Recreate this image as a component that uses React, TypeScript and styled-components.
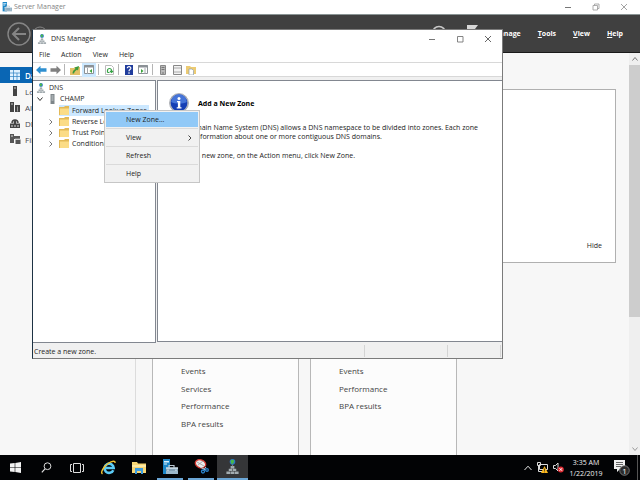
import React from "react";
import styled, { createGlobalStyle, css } from "styled-components";

const Global = createGlobalStyle`
  * { box-sizing: border-box; }
  body {
    margin: 0;
    font-family: "Open Sans", "Noto Sans", sans-serif;
    font-size: 7px;
    color: #1e1e1e;
    overflow: hidden;
  }
  button {
    font: inherit;
    color: inherit;
    background: none;
    border: 0;
    padding: 0;
    margin: 0;
    display: flex;
    align-items: center;
  }
  ul { list-style: none; margin: 0; padding: 0; }
  a { color: inherit; text-decoration: none; }
  p, h1, h2 { margin: 0; font-size: inherit; font-weight: inherit; }
  svg { display: block; flex: none; }
`;

/* ---------- Desktop ---------- */

const Desktop = styled.div`
  position: relative;
  display: flex;
  flex-direction: column;
  height: 100vh;
  overflow: hidden;
`;

/* ---------- Server Manager ---------- */

const ServerWindow = styled.section`
  flex: 1;
  min-height: 0;
  display: flex;
  flex-direction: column;
  background: #f7f7f7;
`;

const ServerTitle = styled.header`
  height: 14px;
  flex: none;
  display: flex;
  align-items: center;
  padding: 0 12px 0 2px;
  gap: 2px;
  background: #fff;
  color: #858585;
  font-size: 7px;
  line-height: 12px;
`;

const WindowButtons = styled.div`
  margin-left: auto;
  display: flex;
  align-items: center;
  gap: 20px;
`;

const Ribbon = styled.nav`
  height: 39px;
  flex: none;
  display: flex;
  align-items: center;
  padding: 0 17px 0 7px;
  background: #404040;
  border-top: 1px solid #8a9494;
  border-bottom: 1px solid #1a1a1a;
  color: #fff;
  font-size: 7px;
  font-weight: 700;
`;

const RibbonTools = styled.div`
  margin-left: auto;
  display: flex;
  align-items: center;
  gap: 8px;
`;

const RibbonMenu = styled.div`
  display: flex;
  margin-left: 14px;
  gap: 17px;
  u { text-underline-offset: 1px; }
`;

const ServerBody = styled.div`
  flex: 1;
  min-height: 0;
  display: flex;
`;

const Sidebar = styled.ul`
  width: 136px;
  flex: none;
  padding-top: 14px;
  border-right: 1px solid #dcdcdc;
`;

const SidebarItem = styled.li<{ $active?: boolean }>`
  height: 16px;
  a {
    display: flex;
    align-items: center;
    gap: 4px;
    height: 16px;
    padding-left: 9px;
    font-size: 8px;
    color: #4a4a55;
    white-space: nowrap;
  }
  ${(p) =>
    p.$active &&
    css`
      background: #0a66b4;
      a { color: #fff; font-weight: 600; }
    `}
`;

const Dashboard = styled.main`
  flex: 1;
  min-width: 0;
  padding: 36px 13px 0 16px;
  overflow: hidden;
`;

const Welcome = styled.section`
  height: 174px;
  display: flex;
  justify-content: flex-end;
  align-items: flex-end;
  padding: 0 13px 12px;
  background: #fff;
  border: 1px solid #b0b0b0;
`;

const Tiles = styled.div`
  display: flex;
  gap: 11px;
  padding-top: 31px;
`;

const Tile = styled.ul`
  width: 147px;
  height: 200px;
  display: grid;
  grid-template-rows: repeat(4, 1fr);
  align-items: center;
  padding: 67px 28px 61px;
  background: #fcfcfc;
  border: 1px solid #b8b8b8;
  font-size: 8px;
  color: #444;
`;

const ScrollTrack = styled.div`
  width: 11px;
  flex: none;
  display: flex;
  flex-direction: column;
  align-items: center;
  background: #efefef;
`;

const ScrollButton = styled.button`
  width: 11px;
  height: 12px;
  justify-content: center;
`;

const ScrollThumb = styled.div`
  width: 11px;
  height: 252px;
  margin-bottom: auto;
  background: #cdcdcd;
`;

/* ---------- DNS Manager ---------- */

const DnsWindow = styled.section`
  position: absolute;
  top: 29px;
  left: 32px;
  right: 137px;
  bottom: 121px;
  display: flex;
  flex-direction: column;
  background: #fff;
  border: 1px solid #7b7b7b;
  border-left-color: #1d3244;
`;

const DnsTitle = styled.header`
  height: 17px;
  flex: none;
  display: flex;
  align-items: center;
  gap: 4px;
  padding: 0 10px 0 4px;
  font-size: 7px;
  color: #222;
`;

const MenuBar = styled.nav`
  height: 16px;
  flex: none;
  display: flex;
  align-items: center;
  gap: 11px;
  padding: 0 6px;
  border-bottom: 1px solid #d8d8d8;
  font-size: 7px;
`;

const Toolbar = styled.div`
  height: 14px;
  flex: none;
  display: flex;
  align-items: center;
  padding: 0 1px;
  border-bottom: 1px solid #d8d8d8;
`;

const ToolButton = styled.button<{ $on?: boolean }>`
  width: 14px;
  height: 14px;
  flex: none;
  justify-content: center;
  ${(p) => p.$on && css`background: #cce8ff;`}
`;

const ToolDivider = styled.span`
  width: 1px;
  height: 11px;
  margin: 0 3px 0 2px;
  background: #b5b5b5;
`;

const Panes = styled.div`
  flex: 1;
  min-height: 0;
  display: flex;
  gap: 1px;
  padding-top: 3px;
  background: #f0f0f0;
`;

const TreePane = styled.div`
  width: 123px;
  flex: none;
  overflow: hidden;
  padding-top: 1px;
  background: #fff;
  border: 1px solid #828790;
  border-left: 0;
`;

const ZoneList = styled.ul`
  margin-top: 1px;
`;

const TreeRow = styled.div<{ $indent: number }>`
  display: flex;
  align-items: center;
  height: 11px;
  padding-left: ${(p) => p.$indent}px;
  white-space: nowrap;
`;

const Twisty = styled.span`
  width: 11px;
  display: flex;
  justify-content: flex-start;
`;

const TreeLabel = styled.span<{ $selected?: boolean }>`
  display: flex;
  align-items: center;
  gap: 3px;
  height: 11px;
  padding-right: 2px;
  ${(p) => p.$selected && css`background: #cce8ff;`}
`;

const DetailPane = styled.article`
  flex: 1;
  min-width: 0;
  overflow: hidden;
  padding: 12px 11px;
  background: #fff;
  border: 1px solid #828790;
  border-width: 1px 0 1px 1px;
  margin-bottom: 1px;
`;

const DetailHeading = styled.div`
  display: flex;
  align-items: center;
  gap: 9px;
  height: 20px;
  font-weight: 700;
  color: #000;
`;

const DetailText = styled.p`
  margin-top: 10px;
  padding-left: 3px;
  line-height: 9px;
  white-space: nowrap;
  color: #222;
`;

const StatusBar = styled.footer`
  height: 15px;
  flex: none;
  display: flex;
  align-items: stretch;
  padding: 2px 1px 1px 1px;
  background: #f0f0f0;
`;

const StatusCell = styled.span<{ $width?: number }>`
  ${(p) => (p.$width ? css`width: ${p.$width}px;` : css`flex: 1;`)}
  display: flex;
  align-items: center;
  border-right: 1px solid #d4d4d4;
`;

/* ---------- Context menu ---------- */

const ContextMenu = styled.ul`
  position: absolute;
  top: 110px;
  left: 104px;
  width: 96px;
  padding: 1px;
  background: #f1f1f1;
  border: 1px solid #c6c6c6;
`;

const ContextItem = styled.li<{ $active?: boolean }>`
  & + & { border-top: 1px solid #dadada; padding-top: 1px; margin-top: 1px; }
  button {
    width: 100%;
    height: 15px;
    padding: 0 5px 0 20px;
    justify-content: space-between;
    ${(p) => p.$active && css`background: #91c9f7;`}
  }
`;

/* ---------- Taskbar ---------- */

const Taskbar = styled.footer`
  height: 25px;
  flex: none;
  display: flex;
  align-items: stretch;
  background: #020305;
  color: #f0f0f0;
`;

const TaskButton = styled.button<{ $running?: boolean; $active?: boolean }>`
  width: 30px;
  justify-content: center;
  ${(p) => p.$running && css`
    border-bottom: 2px solid #6ba6d6;
    width: 26px;
    margin: 0 2px;
  `}
  ${(p) => p.$active && css`
    background: #353638;
    width: 31px;
    margin: 0;
  `}
`;

const Pinned = styled.div`
  display: flex;
  align-items: stretch;
  gap: 1px;
`;

const Tray = styled.div`
  margin-left: auto;
  display: flex;
  align-items: center;
  gap: 5px;
  padding-right: 2px;
`;

const Clock = styled.time`
  width: 34px;
  margin-right: 6px;
  text-align: center;
  font-size: 7px;
  line-height: 11px;
  white-space: nowrap;
`;

const ShowDesktop = styled.span`
  width: 1px;
  height: 25px;
  margin-left: 2px;
  background: #555;
`;

/* ---------- Icons ---------- */

const ServerManagerIcon = ({ size = 10 }: { size?: number }) => (
  <svg width={size} height={size} viewBox="0 0 16 16">
    <path d="M1 0h7v15H1z" fill="#1c86c8" />
    <path d="M2 2h5v1.500H2zM2 4.500h3v1H2z" fill="#d8f0fc" />
    <path d="M7 8.500V6.500h5v2" fill="none" stroke="#b9c7d1" strokeWidth="1.2" />
    <path d="M4 8.500h12V15H4z" fill="#9db9cb" />
    <path d="M4 11h12" stroke="#5f7f94" strokeWidth=".8" />
    <path d="M4 9h12M6 10.500v1.500M14 10.500v1.500" stroke="#e6f2fa" strokeWidth="1" />
  </svg>
);

const Minimize = () => (
  <svg width="8" height="8" viewBox="0 0 8 8"><path d="M1 4.5h6" stroke="#777" /></svg>
);
const Maximize = () => (
  <svg width="8" height="8" viewBox="0 0 8 8"><path d="M1.500 1.500h5.500v5.500H1.500z" fill="none" stroke="#777" strokeWidth=".9" /></svg>
);
const Restore = () => (
  <svg width="8" height="8" viewBox="0 0 8 8">
    <path d="M1 2.500h4.500V7H1zM2.500 2.500V1H7v4.500H5.500" fill="none" stroke="#999" strokeWidth=".8" />
  </svg>
);
const Close = ({ color = "#555" }: { color?: string }) => (
  <svg width="8" height="8" viewBox="0 0 8 8"><path d="M1 1l6 6M7 1l-6 6" stroke={color} strokeWidth=".9" /></svg>
);

const BackIcon = () => (
  <svg width="24" height="24" viewBox="0 0 24 24" fill="none" stroke="#858585">
    <circle cx="12" cy="12" r="11" strokeWidth="1.4" />
    <path d="M19 12H6M12 6l-6 6 6 6" strokeWidth="2" />
  </svg>
);
const ForwardIcon = () => (
  <svg width="18" height="16" viewBox="0 0 18 16" fill="none" stroke="#858585">
    <circle cx="9" cy="8" r="7" />
    <path d="M5 8h8M10 5l3 3-3 3" />
  </svg>
);
const RefreshIcon = () => (
  <svg width="16" height="18" viewBox="0 0 16 18" fill="none" stroke="#c9c9c9" strokeWidth="1.5">
    <path d="M1.500 8a6.500 6.500 0 0 1 13 0M14.500 10a6.500 6.500 0 0 1-13 0" />
  </svg>
);
const FlagIcon = () => (
  <svg width="12" height="18" viewBox="0 0 12 18"><path d="M0 0h11L8 4l3 4H2v10H0z" fill="#d8d8d8" /></svg>
);

const DashboardIcon = () => (
  <svg width="12" height="12" viewBox="0 0 12 12">
    <path d="M1 1h10v10H1z" fill="#dff1ff" />
    <path d="M1 4h10M4.500 1v10M8 4v7M1 7.500h10" stroke="#2d7fc2" strokeWidth=".7" />
  </svg>
);
const LocalServerIcon = () => (
  <svg width="12" height="12" viewBox="0 0 12 12"><path d="M4 1h4v10H4z" fill="#444" /><path d="M5 3h2" stroke="#ccc" /></svg>
);
const AllServersIcon = () => (
  <svg width="12" height="12" viewBox="0 0 12 12">
    <path d="M1 1h4v10H1zM6 4h5v7H6z" fill="#444" /><path d="M2 3h2" stroke="#ccc" /><path d="M8.500 5.500v5" stroke="#999" />
  </svg>
);
const DnsRoleIcon = () => (
  <svg width="12" height="12" viewBox="0 0 12 12">
    <path d="M3 6a3 3 0 1 1 6 0" fill="#bbb" stroke="#444" strokeWidth="1.400" />
    <path d="M1 6.500h10V11H1zM5 3h2v4H5z" fill="#444" /><path d="M2 9h8" stroke="#ddd" strokeDasharray="2 1" />
  </svg>
);
const FileRoleIcon = () => (
  <svg width="12" height="12" viewBox="0 0 12 12">
    <path d="M1 1h4v9H1zM5 3h6v3H5zM6.500 6.500h5V11h-5z" fill="#555" /><path d="M2 3h2M6 6.200h5" stroke="#ddd" />
  </svg>
);

const DnsIcon = ({ size = 10 }: { size?: number }) => (
  <svg width={size} height={size} viewBox="0 0 16 16">
    <path d="M6 7.500h4V10H6zM4 10.500h3.700v2.200H4zM8.300 10.500H12v2.200H8.300zM1.500 13.200h4V16h-4zM6 13.200h4V16H6zM10.500 13.200h4V16h-4z" fill="#a3acb0" />
    <path d="M8 5.500v2.500" stroke="#7b8488" />
    <circle cx="8" cy="3" r="3" fill="#2a76c9" />
    <path d="M7 .5l3 1-1 3-2 1-1-3z" fill="#49b84a" />
  </svg>
);
const HostIcon = () => (
  <svg width="9" height="10" viewBox="0 0 9 10">
    <path d="M2.500 0h4v10h-4z" fill="#7e868a" /><path d="M3.500 2h2M3.500 4h2M3.500 6h2" stroke="#dfe5e8" strokeWidth=".8" />
  </svg>
);
const FolderIcon = () => (
  <svg width="10" height="9" viewBox="0 0 10 9">
    <path d="M0 1h5l1-1h4v9H0z" fill="#e3b956" /><path d="M1 2.500h9V9H1z" fill="#fbdc86" />
  </svg>
);
const Chevron = ({ dir, color = "#777" }: { dir: "right" | "down" | "up"; color?: string }) => (
  <svg width="6" height="6" viewBox="0 0 6 6" fill="none" stroke={color} strokeWidth="1">
    <path d={dir === "right" ? "M1.500 .5L4 3 1.500 5.500" : dir === "down" ? "M.5 1.500L3 4.500l2.500-3" : "M.5 4.500L3 1.500l2.500 3"} />
  </svg>
);
const TrayChevron = () => (
  <svg width="8" height="6" viewBox="0 0 8 6" fill="none" stroke="#e6e6e6"><path d="M.5 5L4 1.200 7.500 5" /></svg>
);

const Arrow = ({ color, flip }: { color: string; flip?: boolean }) => (
  <svg width="11" height="10" viewBox="0 0 11 10">
    <path d={flip ? "M11 5L6.500 .8v2.400H.5v3.600h6v2.400z" : "M0 5L4.500 .8v2.400h6v3.600h-6v2.400z"} fill={color} />
  </svg>
);
const UpFolderIcon = () => (
  <svg width="10" height="10" viewBox="0 0 10 10">
    <path d="M0 3h4l1-1h5v8H0z" fill="#e2c066" /><path d="M2.500 8.500c0-2.500 1-3.500 3-4.500L4.500 2.500 9 1 8 5.500l-1-.8C5.500 5.500 4.500 6.500 4 8.500z" fill="#3c9a3c" />
  </svg>
);
const PanelIcon = ({ right }: { right?: boolean }) => (
  <svg width="10" height="9" viewBox="0 0 10 9">
    <path d="M.5.5h9v8h-9z" fill="#fff" stroke="#8b9196" />
    <path d="M0 1.500h10" stroke="#8b9196" strokeWidth="2" />
    <path d={right ? "M7 3v6" : "M3.500 3v6"} stroke="#a3a8ac" />
    <path d={right ? "M3 4l2.500 2L3 8z" : "M8 4L5.500 6 8 8z"} fill="#3ba33b" />
  </svg>
);
const SheetRefreshIcon = () => (
  <svg width="9" height="10" viewBox="0 0 9 10">
    <path d="M.5.5h6l2 2v7h-8z" fill="#fff" stroke="#bbb" />
    <path d="M2.500 7.500V5.500a2 2 0 0 1 4 0V7M2.500 7.500h2M5 6l1.500 1.500L8 6" fill="none" stroke="#35a345" strokeWidth="1.200" />
  </svg>
);
const HelpIcon = () => (
  <svg width="8" height="10" viewBox="0 0 8 10">
    <path d="M0 0h8v10H0z" fill="#203c9c" />
    <path d="M2.300 3.300C2.300 1 6 1.300 5.800 3.400 5.600 4.600 4 4.600 4 6.200M4 7.300v1.400" fill="none" stroke="#fff" strokeWidth="1.200" />
  </svg>
);
const RackIcon = () => (
  <svg width="6" height="10" viewBox="0 0 6 10">
    <path d="M.5.5h5v9h-5z" fill="#b9b9b9" stroke="#888" /><path d="M1.500 2.500h3M1.500 4.500h3M2 8h2" stroke="#666" strokeWidth=".8" />
  </svg>
);
const ListIcon = () => (
  <svg width="9" height="10" viewBox="0 0 9 10">
    <path d="M.5.5h8v9h-8z" fill="#f3f3f3" stroke="#888" /><path d="M1 3h7M1 7h7" stroke="#aaa" />
  </svg>
);
const FolderPageIcon = () => (
  <svg width="10" height="10" viewBox="0 0 10 10">
    <path d="M0 1h4l1 1h5v7H0z" fill="#eccb73" /><path d="M3 4h3l1.500 1.500V10H3z" fill="#fff" stroke="#8e9dae" strokeWidth=".7" />
  </svg>
);
const InfoIcon = () => (
  <svg width="20" height="20" viewBox="0 0 20 20">
    <circle cx="10" cy="10" r="9.500" fill="#b8bcc4" stroke="#8c8f96" strokeWidth=".6" />
    <circle cx="10" cy="10" r="8.400" fill="#163fb4" />
    <path d="M2.200 9a7.800 7.800 0 0 1 15.600 0c-4 2-11.600 2-15.600 0z" fill="#4574d8" />
    <path d="M8 8h3.300v6.300h1.200v1.200H7.700v-1.200h1.200V9.200H8z" fill="#fff" />
    <circle cx="10" cy="5.500" r="1.500" fill="#fff" />
  </svg>
);

const StartIcon = () => (
  <svg width="11" height="11" viewBox="0 0 11 11" fill="#f2f2f2">
    <path d="M0 1.600L4.700 1v4.200H0zM5.300.9L11 0v5.200H5.300zM0 5.800h4.700V10L0 9.400zM5.300 5.800H11V11l-5.700-.9z" />
  </svg>
);
const SearchIcon = () => (
  <svg width="11" height="11" viewBox="0 0 11 11" fill="none" stroke="#ddd">
    <circle cx="6.500" cy="4.200" r="3.400" /><path d="M4 6.800L.8 10.400" strokeWidth="1.200" />
  </svg>
);
const TaskViewIcon = () => (
  <svg width="14" height="10" viewBox="0 0 14 10" fill="none" stroke="#ddd">
    <path d="M3.500.5h7v9h-7zM2 1.500H.5v7H2M12 1.500h1.500v7H12" />
  </svg>
);
const ExplorerBrowserIcon = () => (
  <svg width="15" height="15" viewBox="0 0 15 15">
    <path d="M12.300 10.200A4.600 4.600 0 1 1 12.700 8H4" fill="none" stroke="#5ccbf5" strokeWidth="2.600" />
    <path d="M1.500 14C-.8 12.500 2.500 6.500 7 3.500S14.300.5 14 3" fill="none" stroke="#f2c230" strokeWidth="1.400" />
  </svg>
);
const ExplorerIcon = () => (
  <svg width="14" height="12" viewBox="0 0 14 12">
    <path d="M0 0h5l1 1.500h8V11H0z" fill="#f6d675" /><path d="M0 3h14v2H0z" fill="#fdeaa6" />
    <path d="M3 6h8v6H9V9H5v3H3z" fill="#3d9de0" />
  </svg>
);
const SnipIcon = () => (
  <svg width="15" height="15" viewBox="0 0 15 15">
    <ellipse cx="6.500" cy="4.800" rx="5.300" ry="4" fill="#ececec" stroke="#d33a32" strokeWidth="1.300" transform="rotate(20 6.500 4.800)" />
    <path d="M3 3l7 4M4 6l5-4" stroke="#999" strokeWidth=".8" />
    <path d="M6 8l6 3M12 8l-3 4" stroke="#c6d8e6" />
    <g fill="none" stroke="#2c85cf" strokeWidth="1.300"><circle cx="9" cy="12.500" r="1.500" /><circle cx="13" cy="11" r="1.300" /></g>
  </svg>
);
const NetworkIcon = () => (
  <svg width="11" height="11" viewBox="0 0 11 11">
    <path d="M2.500 2.500h8v5h-8zM.5.5h3v3h-3zM1.500 3.500v6h4" fill="none" stroke="#ddd" />
    <path d="M7.500 4l3.500 7H4z" fill="#fbb81c" /><path d="M7.500 6.500V9M7.500 9.500v.8" stroke="#333" strokeWidth=".8" />
  </svg>
);
const VolumeIcon = () => (
  <svg width="11" height="11" viewBox="0 0 11 11">
    <path d="M.5 3.500h2L5 1v8L2.500 6.500h-2z" fill="none" stroke="#ddd" />
    <circle cx="7.800" cy="7.500" r="3" fill="#dc2a31" /><path d="M6.500 6.200l2.600 2.600M9.100 6.200L6.500 8.800" stroke="#fff" />
  </svg>
);
const ActionCenterIcon = () => (
  <svg width="16" height="17" viewBox="0 0 16 17">
    <path d="M0 1h11v9H6l-3 3v-3H0z" fill="#f0f0f0" /><path d="M2 3.500h7M2 5.500h7M2 7.500h5" stroke="#444" strokeWidth=".8" />
    <circle cx="10.500" cy="11.500" r="4.800" fill="#2b2b2b" stroke="#888" strokeWidth=".8" />
    <text x="10.500" y="14.500" textAnchor="middle" fontSize="8" fill="#fff">1</text>
  </svg>
);

/* ---------- App ---------- */

const ribbonItems = ["Manage", "Tools", "View", "Help"];

const sidebarItems = [
  { label: "Dashboard", icon: <DashboardIcon />, active: true },
  { label: "Local Server", icon: <LocalServerIcon /> },
  { label: "All Servers", icon: <AllServersIcon /> },
  { label: "DNS", icon: <DnsRoleIcon /> },
  { label: "File and Storage Services", icon: <FileRoleIcon /> },
];

const zones = ["Forward Lookup Zones", "Reverse Lookup Zones", "Trust Points", "Conditional Forwarders"];

export default function App() {
  return (
    <Desktop>
      <Global />
      <ServerWindow>
        <ServerTitle>
          <ServerManagerIcon />
          <h1>Server Manager</h1>
          <WindowButtons>
            <button aria-label="Minimize"><Minimize /></button>
            <button aria-label="Restore"><Restore /></button>
            <button aria-label="Close"><Close color="#999" /></button>
          </WindowButtons>
        </ServerTitle>
        <Ribbon>
          <button aria-label="Back"><BackIcon /></button>
          <button aria-label="Forward"><ForwardIcon /></button>
          <RibbonTools>
            <button aria-label="Refresh"><RefreshIcon /></button>
            <span>|</span>
            <button aria-label="Notifications"><FlagIcon /></button>
          </RibbonTools>
          <RibbonMenu>
            {ribbonItems.map((item) => (
              <button key={item}><span><u>{item[0]}</u>{item.slice(1)}</span></button>
            ))}
          </RibbonMenu>
        </Ribbon>
        <ServerBody>
          <Sidebar>
            {sidebarItems.map((item) => (
              <SidebarItem key={item.label} $active={item.active}>
                <a href="#">{item.icon}{item.label}</a>
              </SidebarItem>
            ))}
          </Sidebar>
          <Dashboard>
            <Welcome><a href="#">Hide</a></Welcome>
            <Tiles>
              <Tile>
                <li>Events</li><li>Services</li><li>Performance</li><li>BPA results</li>
              </Tile>
              <Tile>
                <li>Events</li><li>Performance</li><li>BPA results</li>
              </Tile>
            </Tiles>
          </Dashboard>
          <ScrollTrack>
            <ScrollButton aria-label="Scroll up"><Chevron dir="up" /></ScrollButton>
            <ScrollThumb />
            <ScrollButton aria-label="Scroll down"><Chevron dir="down" color="#999" /></ScrollButton>
          </ScrollTrack>
        </ServerBody>
      </ServerWindow>

      <DnsWindow>
        <DnsTitle>
          <DnsIcon />
          <h2>DNS Manager</h2>
          <WindowButtons>
            <button aria-label="Minimize"><Minimize /></button>
            <button aria-label="Maximize"><Maximize /></button>
            <button aria-label="Close"><Close /></button>
          </WindowButtons>
        </DnsTitle>
        <MenuBar>
          <button>File</button><button>Action</button><button>View</button><button>Help</button>
        </MenuBar>
        <Toolbar>
          <ToolButton aria-label="Back"><Arrow color="#2e8fd0" /></ToolButton>
          <ToolButton aria-label="Forward"><Arrow color="#808080" flip /></ToolButton>
          <ToolDivider />
          <ToolButton aria-label="Up one level"><UpFolderIcon /></ToolButton>
          <ToolButton aria-label="Show console tree" $on><PanelIcon /></ToolButton>
          <ToolDivider />
          <ToolButton aria-label="Refresh"><SheetRefreshIcon /></ToolButton>
          <ToolDivider />
          <ToolButton aria-label="Help"><HelpIcon /></ToolButton>
          <ToolButton aria-label="Show action pane"><PanelIcon right /></ToolButton>
          <ToolDivider />
          <ToolButton aria-label="New server"><RackIcon /></ToolButton>
          <ToolButton aria-label="Filter"><ListIcon /></ToolButton>
          <ToolButton aria-label="New zone"><FolderPageIcon /></ToolButton>
        </Toolbar>
        <Panes>
          <TreePane>
            <TreeRow $indent={3}><TreeLabel><DnsIcon />DNS</TreeLabel></TreeRow>
            <TreeRow $indent={4}>
              <Twisty><Chevron dir="down" color="#333" /></Twisty>
              <TreeLabel><HostIcon />CHAMP</TreeLabel>
            </TreeRow>
            <ZoneList>
              {zones.map((zone, i) => (
                <TreeRow as="li" key={zone} $indent={15}>
                  <Twisty>{i > 0 && <Chevron dir="right" />}</Twisty>
                  <TreeLabel $selected={i === 0}><FolderIcon />{zone}</TreeLabel>
                </TreeRow>
              ))}
            </ZoneList>
          </TreePane>
          <DetailPane>
            <DetailHeading><InfoIcon />Add a New Zone</DetailHeading>
            <DetailText>
              The Domain Name System (DNS) allows a DNS namespace to be divided into zones. Each zone<br />
              stores information about one or more contiguous DNS domains.
            </DetailText>
            <DetailText>To add a new zone, on the Action menu, click New Zone.</DetailText>
          </DetailPane>
        </Panes>
        <StatusBar>
          <StatusCell>Create a new zone.</StatusCell>
          <StatusCell $width={83} />
          <StatusCell $width={53} />
        </StatusBar>
      </DnsWindow>

      <ContextMenu>
        <ContextItem $active><button>New Zone...</button></ContextItem>
        <ContextItem><button>View<Chevron dir="right" color="#444" /></button></ContextItem>
        <ContextItem><button>Refresh</button></ContextItem>
        <ContextItem><button>Help</button></ContextItem>
      </ContextMenu>

      <Taskbar>
        <Pinned>
          <TaskButton aria-label="Start"><StartIcon /></TaskButton>
          <TaskButton aria-label="Search"><SearchIcon /></TaskButton>
          <TaskButton aria-label="Task View"><TaskViewIcon /></TaskButton>
          <TaskButton aria-label="Internet Explorer"><ExplorerBrowserIcon /></TaskButton>
          <TaskButton aria-label="File Explorer"><ExplorerIcon /></TaskButton>
          <TaskButton aria-label="Server Manager" $running><ServerManagerIcon size={16} /></TaskButton>
          <TaskButton aria-label="Snipping Tool" $running><SnipIcon /></TaskButton>
          <TaskButton aria-label="DNS Manager" $running $active><DnsIcon size={15} /></TaskButton>
        </Pinned>
        <Tray>
          <TrayChevron />
          <NetworkIcon />
          <VolumeIcon />
          <Clock>3:35 AM<br />1/22/2019</Clock>
          <ActionCenterIcon />
          <ShowDesktop />
        </Tray>
      </Taskbar>
    </Desktop>
  );
}
